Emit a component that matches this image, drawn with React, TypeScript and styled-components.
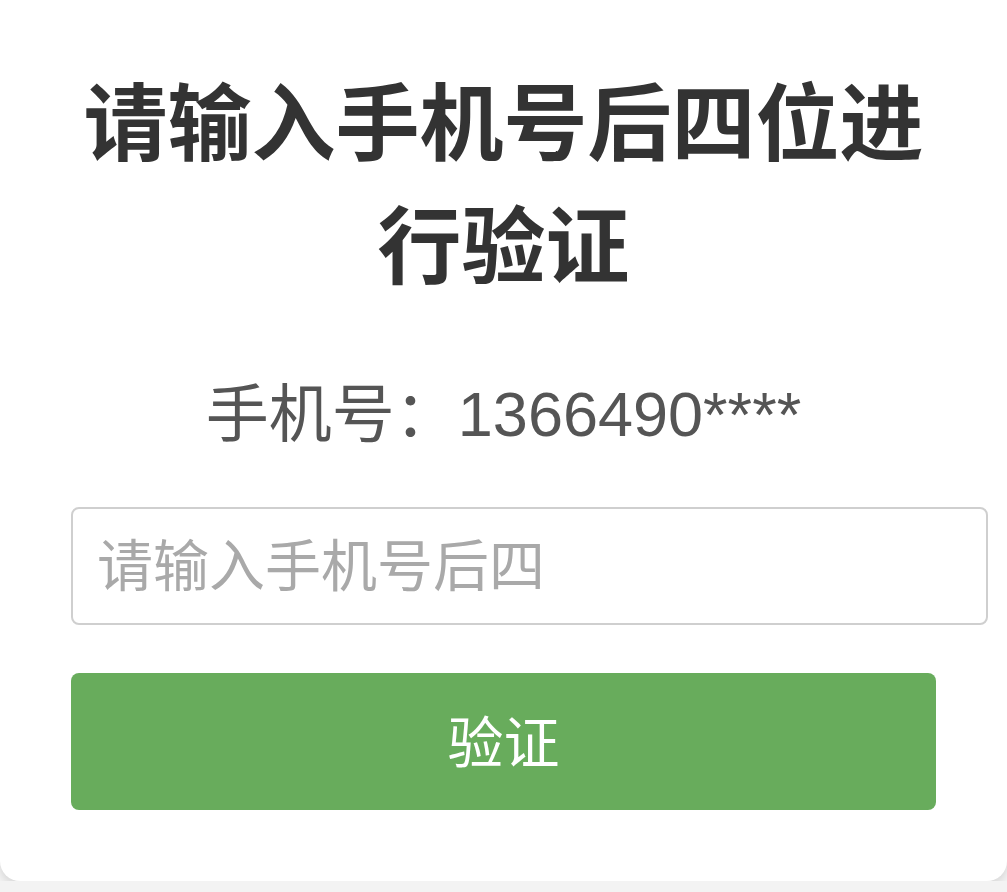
import React from 'react';
import styled, { createGlobalStyle } from 'styled-components';

const GlobalStyle = createGlobalStyle`
  html, body {
    margin: 0;
    padding: 0;
    background: #f3f3f3;
    font-family: "Liberation Sans", "Noto Sans CJK SC", sans-serif;
  }
`;

const Card = styled.div`
  background: #fff;
  border-radius: 0 0 20px 20px;
  box-shadow: 0 4px 10px rgba(0, 0, 0, 0.12);
  padding: 56px 71px 71px;
  display: flex;
  flex-direction: column;
  align-items: stretch;
`;

const Title = styled.h1`
  margin: 0;
  font-family: "Noto Sans CJK SC", sans-serif;
  font-size: 84px;
  line-height: 123px;
  font-weight: 700;
  color: #333;
  text-align: center;
`;

const PhoneLine = styled.p`
  margin: 72px 0 0;
  font-size: 63px;
  line-height: 80px;
  color: #555;
  text-align: center;
`;

const CodeInput = styled.input`
  box-sizing: content-box;
  align-self: flex-start;
  width: 100%;
  height: 104px;
  margin-top: 53px;
  padding: 0 24px 10px;
  border: 2px solid #cfcfcf;
  border-radius: 8px;
  background: #fff;
  font-family: "Noto Sans CJK SC", sans-serif;
  font-size: 56px;
  color: #333;
  outline: none;

  &::placeholder {
    color: #a9a9a9;
  }
`;

const SubmitButton = styled.button`
  height: 137px;
  margin-top: 48px;
  padding: 0 0 6px;
  border: none;
  border-radius: 8px;
  background: #68ac5c;
  color: #fff;
  font-family: "Noto Sans CJK SC", sans-serif;
  font-size: 56px;
  cursor: pointer;
`;

const App: React.FC = () => (
  <>
    <GlobalStyle />
    <Card>
      <Title>请输入手机号后四位进行验证</Title>
      <PhoneLine>手机号：1366490****</PhoneLine>
      <CodeInput type="tel" maxLength={4} placeholder="请输入手机号后四" />
      <SubmitButton type="button">验证</SubmitButton>
    </Card>
  </>
);

export default App;
